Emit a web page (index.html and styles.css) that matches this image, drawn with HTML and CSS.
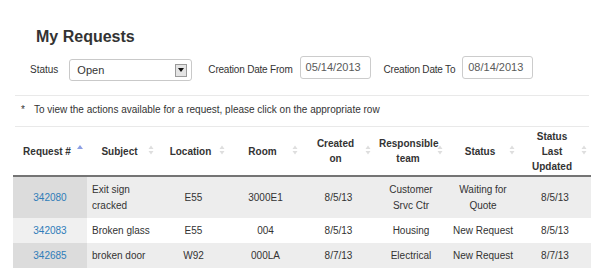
FILE: index.html
```html
<!DOCTYPE html>
<html lang="en">
<head>
<meta charset="utf-8">
<title>My Requests</title>
<link rel="stylesheet" href="styles.css">
</head>
<body>
<div class="page">
  <h1 class="title">My Requests</h1>
  <div class="filters">
    <span class="lbl lbl-status">Status</span>
    <div class="select" role="combobox">
      <span class="select-val">Open</span>
      <span class="select-btn"><svg width="6" height="4" viewBox="0 0 6 4"><path d="M0 0h6L3 4z" fill="#111"/></svg></span>
    </div>
    <span class="lbl lbl-from">Creation Date From</span>
    <div class="input">05/14/2013</div>
    <span class="lbl lbl-to">Creation Date To</span>
    <div class="input">08/14/2013</div>
  </div>
  <div class="note"><span class="ast">*</span><span>To view the actions available for a request, please click on the appropriate row</span></div>
  <table class="grid">
    <colgroup>
      <col class="c1"><col class="c2"><col class="c3"><col class="c4"><col class="c5"><col class="c6"><col class="c7"><col class="c8">
    </colgroup>
    <thead>
      <tr>
        <th>Request #<span class="sort"><svg width="6" height="10" viewBox="0 0 6 10"><path d="M0 4L3 0L6 4z" fill="#8c9fe4"/></svg></span></th>
        <th>Subject<span class="sort"><svg width="6" height="10" viewBox="0 0 6 10"><path d="M0.5 4L3 0.5L5.5 4zM0.5 6L5.5 6L3 9.5z" fill="#dedede"/></svg></span></th>
        <th>Location<span class="sort"><svg width="6" height="10" viewBox="0 0 6 10"><path d="M0.5 4L3 0.5L5.5 4zM0.5 6L5.5 6L3 9.5z" fill="#dedede"/></svg></span></th>
        <th>Room<span class="sort"><svg width="6" height="10" viewBox="0 0 6 10"><path d="M0.5 4L3 0.5L5.5 4zM0.5 6L5.5 6L3 9.5z" fill="#dedede"/></svg></span></th>
        <th>Created<br>on<span class="sort"><svg width="6" height="10" viewBox="0 0 6 10"><path d="M0.5 4L3 0.5L5.5 4zM0.5 6L5.5 6L3 9.5z" fill="#dedede"/></svg></span></th>
        <th>Responsible<br>team<span class="sort"><svg width="6" height="10" viewBox="0 0 6 10"><path d="M0.5 4L3 0.5L5.5 4zM0.5 6L5.5 6L3 9.5z" fill="#dedede"/></svg></span></th>
        <th>Status<span class="sort"><svg width="6" height="10" viewBox="0 0 6 10"><path d="M0.5 4L3 0.5L5.5 4zM0.5 6L5.5 6L3 9.5z" fill="#dedede"/></svg></span></th>
        <th>Status<br>Last<br>Updated<span class="sort"><svg width="6" height="10" viewBox="0 0 6 10"><path d="M0.5 4L3 0.5L5.5 4zM0.5 6L5.5 6L3 9.5z" fill="#dedede"/></svg></span></th>
      </tr>
    </thead>
    <tbody>
      <tr class="odd">
        <td class="sorted"><a href="#">342080</a></td>
        <td class="subj">Exit sign<br>cracked</td>
        <td>E55</td>
        <td>3000E1</td>
        <td>8/5/13</td>
        <td>Customer<br>Srvc Ctr</td>
        <td>Waiting for<br>Quote</td>
        <td>8/5/13</td>
      </tr>
      <tr class="even">
        <td class="sorted"><a href="#">342083</a></td>
        <td class="subj">Broken glass</td>
        <td>E55</td>
        <td>004</td>
        <td>8/5/13</td>
        <td>Housing</td>
        <td>New Request</td>
        <td>8/5/13</td>
      </tr>
      <tr class="odd">
        <td class="sorted"><a href="#">342685</a></td>
        <td class="subj">broken door</td>
        <td>W92</td>
        <td>000LA</td>
        <td>8/7/13</td>
        <td>Electrical</td>
        <td>New Request</td>
        <td>8/7/13</td>
      </tr>
    </tbody>
  </table>
</div>
</body>
</html>
```

FILE: styles.css
```css
html, body {
  margin: 0;
  padding: 0;
  background: #ffffff;
}

body {
  font-family: "Liberation Sans", Arial, sans-serif;
  font-size: 10px;
  color: #333333;
}

.page {
  padding: 27px 13px 0 13px;
  width: 578px;
}

.title {
  margin: 0 0 0 23px;
  font-size: 16px;
  line-height: 20px;
  font-weight: bold;
  color: #333333;
}

.filters {
  display: flex;
  align-items: flex-start;
  margin-top: 9px;
  padding-left: 17px;
}

.lbl {
  display: block;
  height: 23px;
  line-height: 23px;
  margin-top: 2px;
  white-space: nowrap;
  letter-spacing: -0.2px;
}

.lbl-status { margin-right: 11px; letter-spacing: 0; }
.lbl-from { margin-left: 16px; margin-right: 7px; }
.lbl-to { margin-left: 13px; margin-right: 7px; }

.select {
  box-sizing: border-box;
  width: 123px;
  height: 22px;
  margin-top: 3px;
  border: 1px solid #c9c9c9;
  border-radius: 3px;
  background: #ffffff;
  display: flex;
  align-items: center;
  justify-content: space-between;
  padding: 0 4px 0 7px;
  font-size: 11px;
  color: #333333;
}

.select-btn {
  box-sizing: border-box;
  width: 12px;
  height: 13px;
  border: 1px solid #9a9a9a;
  background: #e4e4e4;
  display: flex;
  align-items: center;
  justify-content: center;
}

.select-btn svg { display: block; }

.input {
  box-sizing: border-box;
  width: 71px;
  height: 23px;
  border: 1px solid #cccccc;
  border-radius: 3px;
  background: #ffffff;
  padding: 0 0 0 5px;
  line-height: 20px;
  font-size: 11px;
  color: #5a5a5a;
}

.note {
  box-sizing: border-box;
  margin: 14px 2px 0 2px;
  border-top: 1px solid #e9e9e9;
  border-bottom: 1px solid #e9e9e9;
  height: 32px;
  line-height: 28px;
  padding-left: 6px;
  white-space: nowrap;
}

.ast { margin-right: 9px; }

.grid {
  width: 578px;
  table-layout: fixed;
  border-collapse: collapse;
  border-spacing: 0;
}

.c1 { width: 74px; }
.c2 { width: 71px; }
.c3 { width: 71px; }
.c4 { width: 73px; }
.c5 { width: 73px; }
.c6 { width: 72px; }
.c7 { width: 72px; }
.c8 { width: 72px; }

.grid th {
  position: relative;
  font-weight: bold;
  line-height: 15px;
  padding: 1.5px 10px 1.5px 4px;
  text-align: center;
  vertical-align: middle;
  white-space: nowrap;
  border-bottom: 2px solid #747474;
  height: 45px;
}

.sort {
  position: absolute;
  right: 4px;
  top: 50%;
  margin-top: -6px;
  width: 6px;
  height: 10px;
}

.sort svg { display: block; }

.grid td {
  line-height: 16px;
  padding: 4.5px 4px;
  text-align: center;
  vertical-align: middle;
  white-space: nowrap;
}

.grid td.subj {
  text-align: left;
  padding-left: 5px;
}

.grid tr.odd td { background: #ededed; }
.grid tr.odd td.sorted { background: #dcdcdc; }
.grid tr.even td { background: #ffffff; }
.grid tr.even td.sorted { background: #f0f0f0; }

.grid a {
  color: #2e7cb9;
  text-decoration: none;
}
```
